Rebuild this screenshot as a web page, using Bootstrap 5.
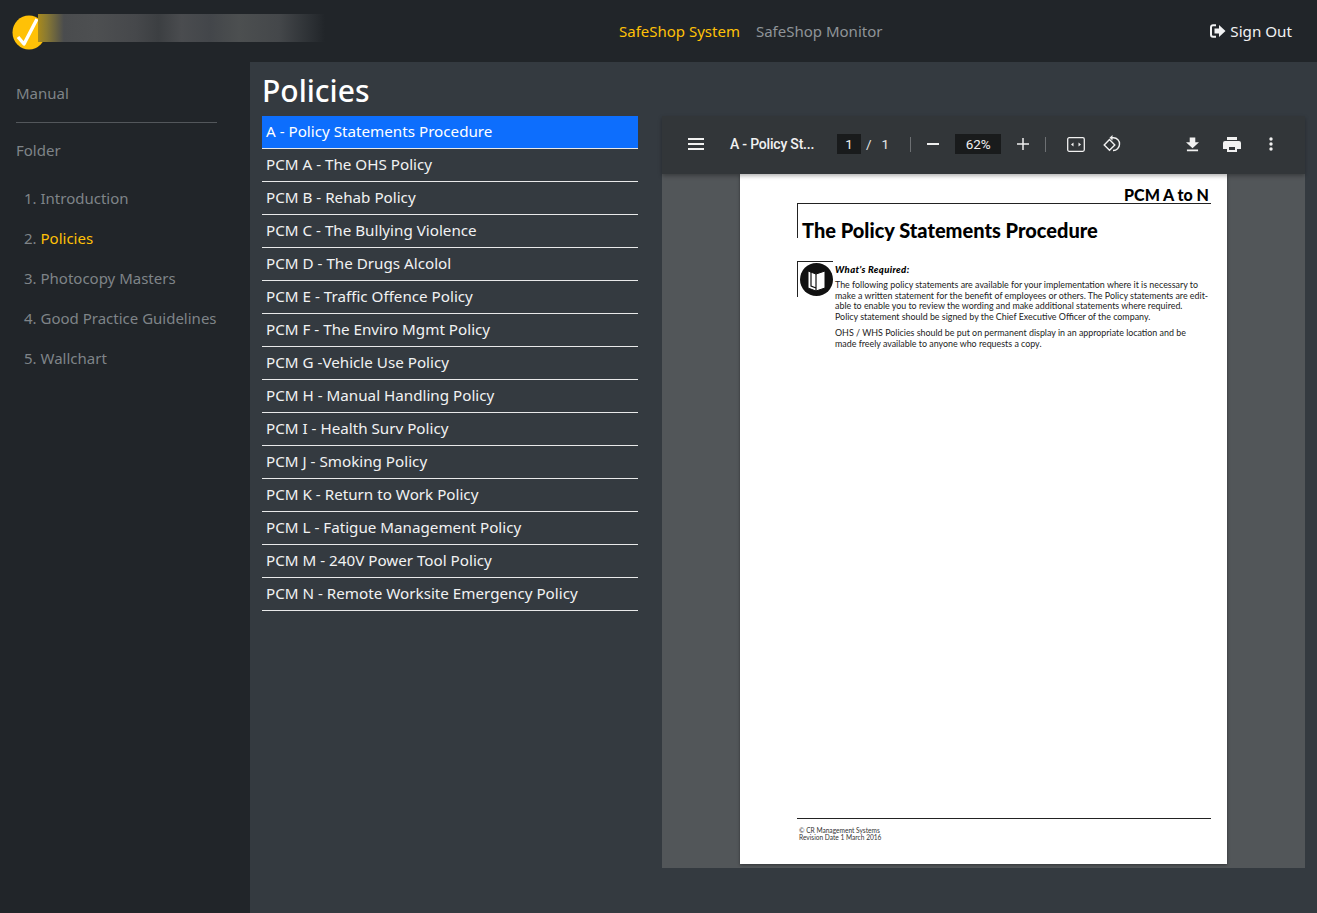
<!DOCTYPE html>
<html lang="en"><head><meta charset="utf-8"><title>Policies</title>
<link rel="stylesheet" href="https://cdn.jsdelivr.net/npm/bootstrap@5.3.0/dist/css/bootstrap.min.css">
<style>
html,body{height:100%}
body{background:#343a40;font-family:"Noto Sans","Open Sans",sans-serif;font-size:16px;overflow:hidden}
.top-bar{height:62px;background:#212529;padding:0 25px 0 12px}
.brand-disc{width:34px;height:35px;flex:none;margin-top:2px}
.brand-blur{width:287px;height:28px;margin-left:-8px;margin-top:-7px;background:linear-gradient(90deg,#a98a1c 0,#8a7a32 3%,#4a4c4e 9%,#4d4f51 20%,#46484b 34%,#3c3f42 42%,#4a4c4f 50%,#43464a 60%,#4c4f50 70%,#44474a 84%,#2c3034 95%,#212529 100%)}
.top-links{position:absolute;left:619px;top:0;height:62px;gap:16px;font-size:15px}
.top-links a{text-decoration:none;color:#8f9498}
.top-links a.on{color:#ffc107}
.sign-out{color:#f1f2f3;text-decoration:none;font-size:15.2px;gap:4px}
.page-body{height:851px}
.side-col{width:250px;background:#212529;padding:21px 33px 0 16px;color:#7f8488;font-size:15px;flex:none}
.side-head{line-height:21px}
.side-rule{height:1px;background:#53575b;margin:18px 0 17px}
.side-list{margin:18px 0 0;padding:0 0 0 8px;list-style:none;width:210px}
.side-list li{height:40px;line-height:38px;white-space:nowrap}
.side-list li.on span{color:#ffc107}
.main-col{padding:0 12px;min-width:0;flex:1}
.pg-title{font-size:30px;font-weight:500;color:#fff;height:54px;line-height:58px;margin:0}
.doc-list{width:376px;flex:none}
.doc-item{height:33px;line-height:30px;padding:0 4px;color:#f1f2f3;border-bottom:1px solid #e8e9ea;font-size:15.2px;white-space:nowrap}
.doc-item.on{background:#0d6efd;color:#fff}
.viewer{width:643px;height:752px;background:#525659;margin-left:24px;flex:none;margin-top:0}
.v-bar{height:58px;background:#323639;color:#f1f1f1;font-family:Roboto,sans-serif;box-shadow:0 2px 4px rgba(0,0,0,.3);padding:0 0 2px 26px;position:relative;z-index:2}
.v-title{font-size:14px;font-weight:500;width:99px;margin-left:26px;letter-spacing:-.2px;white-space:nowrap}
.v-box{background:#191b1c;height:20px;line-height:20px;text-align:center;font-size:13.5px}
.v-sep{width:1px;height:15px;background:#6d7073;flex:none}
.v-num{font-size:13.5px;color:#e8e8e8}
.v-page{width:487px;height:690px;background:#fff;margin-left:78px;color:#000;padding:13px 16px 0 57px;font-family:"Lato",sans-serif;display:flex;flex-direction:column;box-shadow:0 1px 3px rgba(0,0,0,.4)}
.pdf-tag{font-size:16px;font-weight:900;text-align:right;line-height:16px;padding-right:2px;border-bottom:1px solid #222}
.pdf-title{border-left:1px solid #222;height:34px;padding:14px 0 0 4px;font-size:20px;font-weight:900;line-height:25px;white-space:nowrap}
.pdf-req{margin-top:23px;gap:2px}
.pdf-icon{width:36px;height:36px;flex:none;border-left:1px solid #222;border-top:1px solid #222;padding:1px 0 0 2px}
.pdf-text{font-size:8.9px;line-height:10.8px;color:#222;white-space:nowrap;padding-top:4px}
.pdf-text b{display:block;font-style:italic;font-weight:900;color:#000;margin-bottom:4px;font-size:9.5px;letter-spacing:.35px}
.pdf-text p{margin:0 0 5px}
.pdf-foot{margin-top:auto;border-top:1px solid #222;padding:8px 0 0 2px;height:46px;font-size:6.6px;line-height:6.6px;color:#333}
</style></head><body>
<nav class="top-bar d-flex align-items-center position-relative">
 <svg class="brand-disc" viewBox="0 0 34 35"><ellipse cx="17" cy="17.5" rx="16.5" ry="17" fill="#ffc107"/><path d="M6 22 L12 29 L25 4" fill="none" stroke="#fff" stroke-width="3.4" stroke-linejoin="round"/></svg>
 <div class="brand-blur"></div>
 <div class="top-links d-flex align-items-center"><a class="on" href="#">SafeShop System</a><a href="#">SafeShop Monitor</a></div>
 <a class="sign-out ms-auto d-flex align-items-center" href="#"><svg width="16" height="14" viewBox="0 0 16 14"><path d="M6 1.2H3A2 2 0 0 0 1 3.200v7.600a2 2 0 0 0 2 2h3" fill="none" stroke="#f1f2f3" stroke-width="2"/><path d="M9 1 15.500 7 9 13V9.500H4.500v-5H9z" fill="#f1f2f3"/></svg>Sign Out</a>
</nav>
<div class="page-body d-flex">
 <aside class="side-col">
  <div class="side-head">Manual</div>
  <div class="side-rule"></div>
  <div class="side-head">Folder</div>
  <ol class="side-list">
   <li>1. Introduction</li><li class="on">2. <span>Policies</span></li><li>3. Photocopy Masters</li><li>4. Good Practice Guidelines</li><li>5. Wallchart</li>
  </ol>
 </aside>
 <main class="main-col">
  <h1 class="pg-title">Policies</h1>
  <div class="d-flex">
   <div class="doc-list">
    <div class="doc-item on">A - Policy Statements Procedure</div>
    <div class="doc-item">PCM A - The OHS Policy</div>
    <div class="doc-item">PCM B - Rehab Policy</div>
    <div class="doc-item">PCM C - The Bullying Violence</div>
    <div class="doc-item">PCM D - The Drugs Alcolol</div>
    <div class="doc-item">PCM E - Traffic Offence Policy</div>
    <div class="doc-item">PCM F - The Enviro Mgmt Policy</div>
    <div class="doc-item">PCM G -Vehicle Use Policy</div>
    <div class="doc-item">PCM H - Manual Handling Policy</div>
    <div class="doc-item">PCM I - Health Surv Policy</div>
    <div class="doc-item">PCM J - Smoking Policy</div>
    <div class="doc-item">PCM K - Return to Work Policy</div>
    <div class="doc-item">PCM L - Fatigue Management Policy</div>
    <div class="doc-item">PCM M - 240V Power Tool Policy</div>
    <div class="doc-item">PCM N - Remote Worksite Emergency Policy</div>
   </div>
   <section class="viewer">
    <div class="v-bar d-flex align-items-center">
     <svg width="16" height="12" viewBox="0 0 16 12"><path d="M0 1h16M0 6h16M0 11h16" stroke="#f1f1f1" stroke-width="1.800"/></svg>
     <div class="v-title">A - Policy St...</div>
     <div class="v-box" style="width:24px;margin-left:8px">1</div>
     <div class="v-num" style="margin-left:5px">/</div><div class="v-num" style="margin-left:10px">1</div>
     <div class="v-sep" style="margin-left:21px"></div>
     <svg class="ms-3" width="12" height="2" viewBox="0 0 12 2"><path d="M0 1h12" stroke="#eee" stroke-width="2"/></svg>
     <div class="v-box" style="width:46px;margin-left:16px">62%</div>
     <svg style="margin-left:16px" width="12" height="12" viewBox="0 0 12 12"><path d="M0 6h12M6 0v12" stroke="#eee" stroke-width="1.500"/></svg>
     <div class="v-sep" style="margin-left:16px"></div>
     <svg style="margin-left:21px" width="18" height="15" viewBox="0 0 18 15"><rect x=".7" y=".7" width="16.600" height="13.600" rx="1.500" fill="none" stroke="#f1f1f1" stroke-width="1.300"/><path d="M4 7.500 6.500 5.500v4zM14 7.500 11.500 5.500v4z" fill="#f1f1f1"/></svg>
     <svg style="margin-left:18px" width="18" height="18" viewBox="0 0 18 18"><path d="M6.500 4.500 1.200 10l5.300 5.300L11.800 10z" fill="none" stroke="#f1f1f1" stroke-width="1.400"/><path d="M8 2.800h2.500a6 6 0 0 1 6 6.500 6.200 6.200 0 0 1-6.500 6.200" fill="none" stroke="#f1f1f1" stroke-width="1.400"/><path d="M9.500 0 6.500 2.800l3 2.700z" fill="#f1f1f1"/></svg>
     <svg style="margin-left:65px" width="13" height="15" viewBox="0 0 14 15"><path d="M4 0h6v5h4L7 11.500 0 5h4zM1 13h12v1.800H1z" fill="#f1f1f1"/></svg>
     <svg style="margin-left:24px" width="18" height="15" viewBox="0 0 18 15"><path d="M4 0h10v3H4z" fill="#f1f1f1"/><path fill-rule="evenodd" d="M2 4h14a2 2 0 0 1 2 2v6h-4v3H4v-3H0V6a2 2 0 0 1 2-2zm4 6v3h6v-3z" fill="#f1f1f1"/></svg>
     <svg style="margin-left:28px" width="4" height="14" viewBox="0 0 4 14"><circle cx="2" cy="2" r="1.700" fill="#f1f1f1"/><circle cx="2" cy="7" r="1.700" fill="#f1f1f1"/><circle cx="2" cy="12" r="1.700" fill="#f1f1f1"/></svg>
    </div>
    <div class="v-page">
     <div class="pdf-tag">PCM A to N</div>
     <div class="pdf-title">The Policy Statements Procedure</div>
     <div class="pdf-req d-flex">
      <div class="pdf-icon"><svg width="33" height="33" viewBox="0 0 33 33"><circle cx="16.500" cy="16.500" r="16.500" fill="#111"/><path d="M8 8v17l8 3 9-3V8l-9 3z" fill="#fff" stroke="#111"/><path d="M16 11v17M11 7v16l5 2" fill="none" stroke="#111" stroke-width="1.200"/></svg></div>
      <div class="pdf-text"><b>What’s Required:</b><p>The following policy statements are available for your implementation where it is necessary to<br>make a written statement for the benefit of employees or others. The Policy statements are edit-<br>able to enable you to review the wording and make additional statements where required.<br>Policy statement should be signed by the Chief Executive Officer of the company.</p><p>OHS / WHS Policies should be put on permanent display in an appropriate location and be<br>made freely available to anyone who requests a copy.</p></div>
     </div>
     <div class="pdf-foot">© CR Management Systems<br>Revision Date 1 March 2016</div>
    </div>
   </section>
  </div>
 </main>
</div>
<script src="https://cdn.jsdelivr.net/npm/bootstrap@5.3.0/dist/js/bootstrap.bundle.min.js"></script>
</body></html>
